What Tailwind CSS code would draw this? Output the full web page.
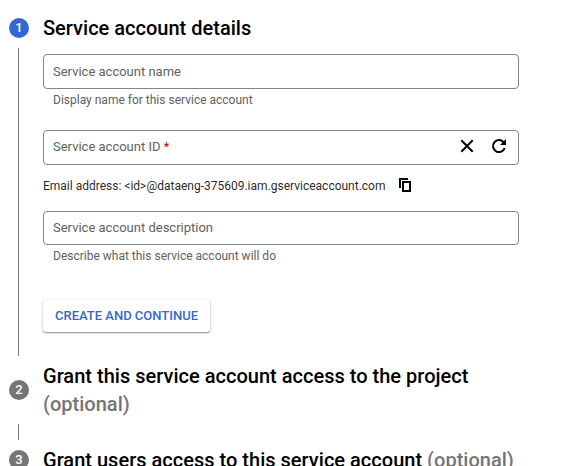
<!DOCTYPE html>
<html lang="en"><head><meta charset="utf-8"><title>Create service account</title>
<script src="https://cdn.jsdelivr.net/npm/@tailwindcss/browser@4"></script></head>
<body class="h-[466px] overflow-hidden bg-white font-[Roboto,sans-serif] text-black/87">
<main class="w-[563px] pt-[14px]">
  <section class="flex">
    <div class="flex w-[43px] flex-col items-start pl-[9px] pt-1">
      <span class="flex size-5 items-center justify-center rounded-full bg-[#3367d6] text-[13px] font-medium text-white">1</span>
      <span class="ml-[9px] mt-[10px] h-[308px] w-px bg-[#757575]"></span>
    </div>
    <div class="w-[476px]">
      <h2 class="text-xl leading-7 font-medium tracking-[.01px] text-black">Service account details</h2>
      <div class="mt-3 flex h-[35px] items-center rounded border border-[#80868b] px-[9px] text-[13px] text-[#616161]">Service account name</div>
      <p class="mt-[3px] pl-[10px] text-xs leading-4 text-[#616161]">Display name for this service account</p>
      <div class="mt-[22px] flex h-[35px] items-center rounded border border-[#80868b] pb-[2px] pl-[9px] pr-[10px] text-[13px] text-[#616161]">
        <span class="flex-1">Service account ID <span class="text-[#d50000]">*</span></span>
        <svg class="mb-px mr-[14px] size-[18px]" viewBox="0 0 18 18" fill="none" stroke="#000" stroke-width="2"><path d="M3.3 3.3l11.4 11.4M14.7 3.3L3.3 14.7"/></svg>
        <svg class="mb-px size-[18px]" viewBox="0 0 18 18" fill="none" stroke="#000" stroke-width="2"><path d="M13.5 5.1A6 6 0 1 0 14.7 11"/><path d="M16 2v6h-6z" fill="#000" stroke="none"/></svg>
      </div>
      <div class="mt-3 flex h-[18px] items-center text-xs text-black/87"><span>Email address: &lt;id&gt;@dataeng-375609.iam.gserviceaccount.com</span>
        <svg class="mb-[2px] ml-[11px] size-[18px]" viewBox="0 0 18 18" fill="#000" fill-rule="evenodd" shape-rendering="crispEdges"><path d="M3 2h9v2H5v8H3zM6 5h9v11H6zM8 7v7h5V7z"/></svg>
      </div>
      <div class="mt-4 flex h-[34px] items-center rounded border border-[#80868b] px-[9px] text-[13px] text-[#616161]">Service account description</div>
      <p class="mt-[3px] pl-[10px] text-xs leading-4 text-[#616161]">Describe what this service account will do</p>
      <button class="mt-9 h-8 w-[167px] rounded-[3px] text-[13px] font-medium text-[#3367d6] shadow-[0_1px_3px_rgba(0,0,0,.25),0_1px_1px_rgba(0,0,0,.25)]">CREATE AND CONTINUE</button>
    </div>
  </section>
  <section class="mt-[6px] flex">
    <div class="flex w-[43px] flex-col items-start pl-[9px] pt-[18px]">
      <span class="flex size-5 items-center justify-center rounded-full bg-[#757575] text-[13px] font-medium text-white">2</span>
      <span class="ml-[9px] mt-6 h-4 w-px bg-[#757575]"></span>
    </div>
    <h2 class="text-xl leading-7 font-medium tracking-[.015px] text-black">Grant this service account access to the project<br><span class="text-[#757575]">(optional)</span></h2>
  </section>
  <section class="mt-[6px] flex">
    <div class="w-[43px] pl-[9px] pt-1"><span class="flex size-5 items-center justify-center rounded-full bg-[#757575] text-[13px] font-medium text-white">3</span></div>
    <h2 class="text-xl leading-7 font-medium tracking-[.015px] text-black">Grant users access to this service account <span class="text-[#757575]">(optional)</span></h2>
  </section>
</main></body></html>
